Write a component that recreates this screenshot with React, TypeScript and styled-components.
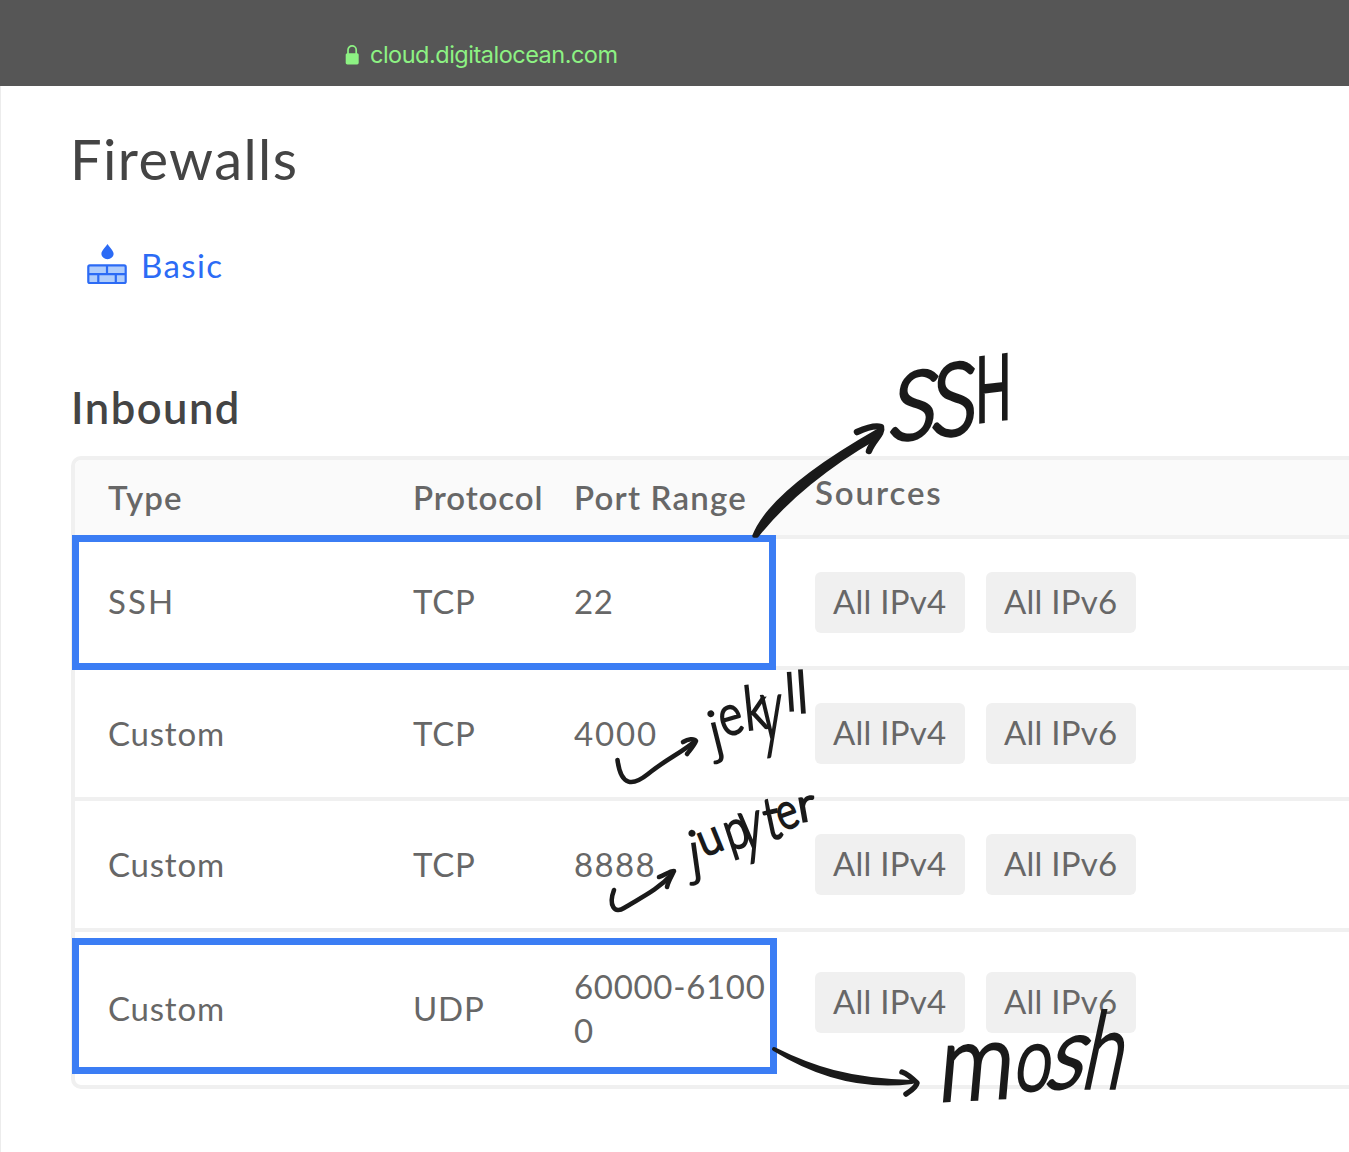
import React from "react";
import styled, { createGlobalStyle } from "styled-components";

const GlobalStyle = createGlobalStyle`
  html, body { margin: 0; padding: 0; background: #fff; }
  body { overflow: hidden; }
  * { box-sizing: border-box; }
`;

const Page = styled.div`
  position: relative;
  width: 1349px;
  height: 1152px;
  overflow: hidden;
  background: #fff;
  font-family: Lato, "Open Sans", sans-serif;
  color: #676767;
`;

const AddressBar = styled.header`
  display: flex;
  align-items: center;
  gap: 11px;
  height: 86px;
  padding: 23px 0 0 345px;
  background: #565656;
  color: #8df283;
`;

const Host = styled.span`
  font: 400 23.5px/30px Inter, sans-serif;
  letter-spacing: -0.5px;
`;

const Main = styled.main`
  height: 1066px;
  padding: 33px 0 0 70px;
  border-left: 1px solid #ececec;
`;

const Title = styled.h1`
  margin: 0 0 0 -1px;
  font-size: 56px;
  line-height: 80px;
  font-weight: 400;
  letter-spacing: 1.4px;
  color: #444;
`;

const FirewallLink = styled.a`
  display: flex;
  align-items: center;
  gap: 14px;
  height: 44px;
  margin: 44px 0 0 16px;
  font-size: 33px;
  letter-spacing: 1.4px;
  color: #2c6bf5;
`;

const SectionTitle = styled.h2`
  margin: 90px 0 0;
  height: 60px;
  font-size: 43.5px;
  line-height: 60px;
  font-weight: 600;
  letter-spacing: 1.5px;
  color: #444;
`;

const Table = styled.div`
  width: 1400px;
  margin: 19px 0 0;
  border: 4px solid #f0f0f0;
  border-radius: 10px;
`;

const Row = styled.div<{ $height: number }>`
  display: grid;
  grid-template-columns: 305px 161px 241px 1fr;
  align-items: center;
  height: ${(p) => p.$height}px;
  padding-left: 33px;
  border-bottom: 4.6px solid #f0f0f0;
  font-size: 33px;
  line-height: 44px;
  &:last-child { border-bottom: 0; }
`;

const HeadRow = styled(Row)`
  background: #fafafa;
  border-radius: 6px 0 0 0;
  font-weight: 600;
`;

const Cell = styled.div<{ $lift?: number; $tracking?: number }>`
  padding-bottom: ${(p) => (p.$lift ?? 1) * 2}px;
  letter-spacing: ${(p) => p.$tracking ?? 0.8}px;
`;

const PortCell = styled(Cell)`
  width: 198px;
  word-break: break-all;
`;

const Chips = styled.div<{ $lift?: number }>`
  display: flex;
  gap: 21.5px;
  padding-bottom: ${(p) => (p.$lift ?? 0) * 2}px;
`;

const Chip = styled.span`
  width: 149.5px;
  height: 61px;
  border-radius: 6px;
  background: #f0f0f0;
  text-align: center;
  line-height: 59px;
  letter-spacing: 0.25px;
`;

const Highlight = styled.div<{ $top: number; $width: number; $height: number }>`
  position: absolute;
  left: 72px;
  top: ${(p) => p.$top}px;
  width: ${(p) => p.$width}px;
  height: ${(p) => p.$height}px;
  border: 7px solid #3b7df4;
`;

const Ink = styled.svg`
  position: absolute;
  inset: 0;
  fill: none;
  stroke: #1a1a1a;
  stroke-linecap: round;
  stroke-linejoin: round;
`;

interface Mark {
  c: string;
  x: number;
  y: number;
  size: number;
  sx?: number;
  sy?: number;
  rot?: number;
  skew?: number;
  pen?: number;
}

const Letter = styled.span<{ $m: Mark; $pen: number }>`
  position: absolute;
  left: ${(p) => p.$m.x}px;
  top: ${(p) => p.$m.y - p.$m.size * 0.887}px;
  font-size: ${(p) => p.$m.size}px;
  line-height: 1;
  font-weight: 300;
  color: #1a1a1a;
  -webkit-text-stroke: ${(p) => p.$m.pen ?? p.$pen}px #1a1a1a;
  stroke-linejoin: round;
  transform-origin: 0 0.887em;
  transform: rotate(${(p) => p.$m.rot ?? 0}deg) skewX(${(p) => p.$m.skew ?? 0}deg)
    scale(${(p) => p.$m.sx ?? 1}, ${(p) => p.$m.sy ?? 1});
`;

const words: { pen: number; marks: Mark[] }[] = [
  {
    pen: 4,
    marks: [
      { c: "S", x: 887, y: 440, size: 94, sx: 0.92, rot: -3, skew: -12 },
      { c: "S", x: 930, y: 436, size: 100, sx: 0.86, rot: -3, skew: -6 },
      { c: "H", x: 976, y: 421, size: 86, sx: 0.54, rot: -7, skew: -7, pen: 6 },
    ],
  },
  {
    pen: 2.6,
    marks: [
      { c: "j", x: 714, y: 753, size: 58, rot: -14, pen: 1.8 },
      { c: "e", x: 724, y: 738, size: 56, sx: 0.8, rot: -16 },
      { c: "k", x: 746, y: 730, size: 60, sx: 0.8, rot: -6 },
      { c: "y", x: 762, y: 741, size: 60, sx: 0.68, sy: 1.48, rot: -2 },
      { c: "l", x: 786, y: 711, size: 52, rot: -4, pen: 2 },
      { c: "l", x: 797, y: 713, size: 58, rot: -4, pen: 2 },
    ],
  },
  {
    pen: 2.6,
    marks: [
      { c: "j", x: 691, y: 874, size: 60, rot: -8, pen: 1.8 },
      { c: "u", x: 704, y: 858, size: 46, sx: 0.95, rot: -22 },
      { c: "p", x: 730, y: 852, size: 54, sx: 0.8, rot: -18 },
      { c: "y", x: 744, y: 852, size: 56, sx: 0.75, sy: 1.3, rot: -9 },
      { c: "t", x: 768, y: 840, size: 58, sx: 0.8, rot: -12 },
      { c: "e", x: 782, y: 831, size: 50, sx: 0.8, rot: -20 },
      { c: "r", x: 800, y: 823, size: 46, sx: 1.1, rot: -10 },
    ],
  },
  {
    pen: 3.6,
    marks: [
      { c: "m", x: 937, y: 1101, size: 106, sx: 0.88, rot: -3, skew: -8 },
      { c: "o", x: 1013, y: 1090, size: 88, sx: 0.74, rot: 0, skew: -8 },
      { c: "s", x: 1043, y: 1089, size: 98, sx: 0.88, rot: -4, skew: -22 },
      { c: "h", x: 1080, y: 1088, size: 106, sx: 0.69, rot: 0, skew: -12 },
    ],
  },
];

const LockIcon = () => (
  <svg width="14" height="20" viewBox="0 0 14 20">
    <rect x="0.7" y="8.2" width="13" height="11.2" rx="1.6" fill="#8df283" />
    <path d="M3 9V5a4.100 4.100 0 0 1 8.200 0V9" fill="none" stroke="#8df283" strokeWidth="1.700" />
  </svg>
);

const FirewallIcon = () => (
  <svg width="40" height="42" viewBox="0 0 40 42">
    <path d="M20.500 0C18.400 3.200 14.400 6.700 14.400 9.800a6.100 5.400 0 0 0 12.200 0C26.600 6.700 22.600 3.200 20.500 0z" fill="#2c6bf5" />
    <rect x="1.300" y="21.400" width="37.400" height="17.600" rx="1.600" fill="#b0cdfb" stroke="#2c6bf5" strokeWidth="2.200" />
    <path d="M1 30.100h38M20 21.400v8.700M11.300 30.100v9M28.800 30.100v9" fill="none" stroke="#2c6bf5" strokeWidth="2.200" />
  </svg>
);

const rules = [
  { type: "SSH", protocol: "TCP", port: "22", height: 131, tracking: 2.1, lift: 0, textLift: 1.5 },
  { type: "Custom", protocol: "TCP", port: "4000", height: 131, portTracking: 1.9 },
  { type: "Custom", protocol: "TCP", port: "8888", height: 131, portTracking: 1.4 },
  { type: "Custom", protocol: "UDP", port: "60000-61000", height: 153, lift: 6.5 },
];

export default function App() {
  return (
    <Page>
      <GlobalStyle />
      <AddressBar>
        <LockIcon />
        <Host>cloud.digitalocean.com</Host>
      </AddressBar>
      <Main>
        <Title>Firewalls</Title>
        <FirewallLink>
          <FirewallIcon />
          Basic
        </FirewallLink>
        <SectionTitle>Inbound</SectionTitle>
        <Table>
          <HeadRow $height={79}>
            <Cell $tracking={1.1} $lift={1}>Type</Cell>
            <Cell $tracking={0.9} $lift={1}>Protocol</Cell>
            <Cell $tracking={1.2} $lift={1}>Port Range</Cell>
            <Cell $tracking={1.9} $lift={6}>Sources</Cell>
          </HeadRow>
          {rules.map((r) => (
            <Row key={r.port} $height={r.height}>
              <Cell $tracking={r.tracking} $lift={r.textLift}>{r.type}</Cell>
              <Cell $tracking={0.8} $lift={r.textLift}>{r.protocol}</Cell>
              <PortCell $tracking={r.portTracking ?? 0.7} $lift={r.textLift}>{r.port}</PortCell>
              <Chips $lift={r.lift}>
                <Chip>All IPv4</Chip>
                <Chip>All IPv6</Chip>
              </Chips>
            </Row>
          ))}
        </Table>
      </Main>
      <Highlight $top={535} $width={704} $height={135} />
      <Highlight $top={938} $width={705} $height={136} />
      <Ink width="1349" height="1152" viewBox="0 0 1349 1152">
        <path
          d="M754 536C764 510 800 475 877 431C884 427 881 435 876 438C830 464 785 500 757 536Z"
          fill="#1a1a1a"
          strokeWidth="3.5"
        />
        <path d="M857 432C866 428 875 425 881 427C883 434 873 440 869 451" strokeWidth="6.500" />
        <path d="M617.500 760C621 787 633 786 648 774C665 760 681 753 694 742" strokeWidth="4.600" />
        <path d="M683 742C688 739 694 738 696 741C694 746 690 750 687 754" strokeWidth="4.600" />
        <path d="M614 890C608 906 615 914 624 908C640 898 658 890 672 874" strokeWidth="4.600" />
        <path d="M659 877C664 876 669 871 674 871C671 877 668 882 667 887" strokeWidth="4.600" />
        <path
          d="M774 1049C812 1068 848 1080 912 1082C865 1088 818 1076 774 1049Z"
          fill="#1a1a1a"
          strokeWidth="4"
        />
        <path d="M902 1072C908 1074 913 1079 917 1083C916 1088 909 1092 906 1094" strokeWidth="5.500" />
      </Ink>
      {words.map((w, i) => (
        <div key={i}>
          {w.marks.map((m, j) => (
            <Letter key={j} $m={m} $pen={w.pen}>
              {m.c}
            </Letter>
          ))}
        </div>
      ))}
    </Page>
  );
}
